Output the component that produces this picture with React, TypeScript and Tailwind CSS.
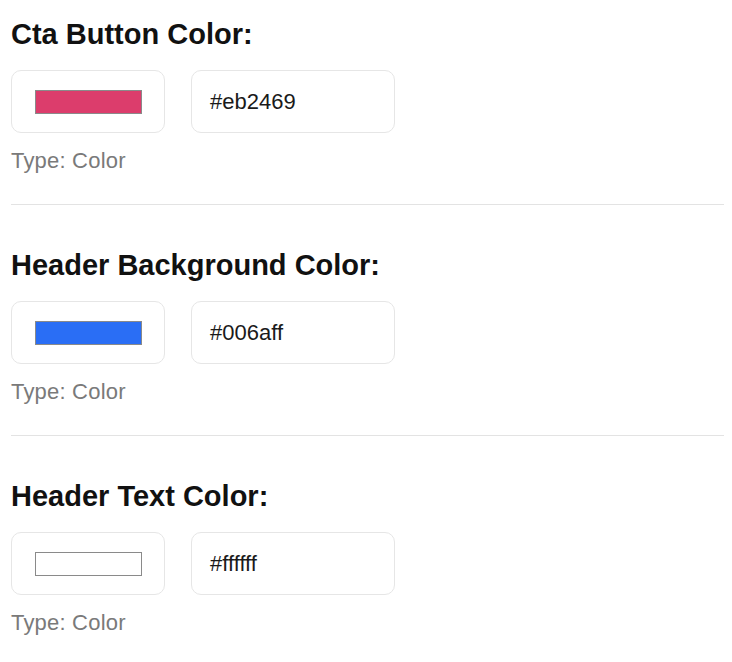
const fields = [
  { label: "Cta Button Color:", value: "#eb2469", swatch: "bg-[#dc3d6c]" },
  { label: "Header Background Color:", value: "#006aff", swatch: "bg-[#2a6ef5]" },
  { label: "Header Text Color:", value: "#ffffff", swatch: "bg-white" },
];

export default function App() {
  return (
    <div className="bg-white min-h-screen px-[11px] pt-[18px] font-['Liberation_Sans',Arial,sans-serif]">
      {fields.map((field, i) => (
        <div key={field.label}>
          <h2 className="text-[29px] leading-[32px] font-bold text-[#111]">{field.label}</h2>
          <div className="flex gap-[26px] mt-[20px]">
            <div className="w-[154px] h-[63px] border border-[#e6e6e6] rounded-[10px] flex items-center justify-center">
              <div className={`w-[107px] h-[24px] border border-[#8a8a8a] ${field.swatch}`} />
            </div>
            <div className="w-[204px] h-[63px] border border-[#e6e6e6] rounded-[10px] flex items-center px-[18px] text-[22px] text-[#1a1a1a]">
              {field.value}
            </div>
          </div>
          <p className="mt-[14px] text-[22px] leading-[28px] text-[#7a7a7a] tracking-[0.2px]">Type: Color</p>
          {i < fields.length - 1 && <hr className="mt-[29px] mb-[44px] border-t border-[#e3e3e3] mr-[-3px]" />}
        </div>
      ))}
    </div>
  );
}
